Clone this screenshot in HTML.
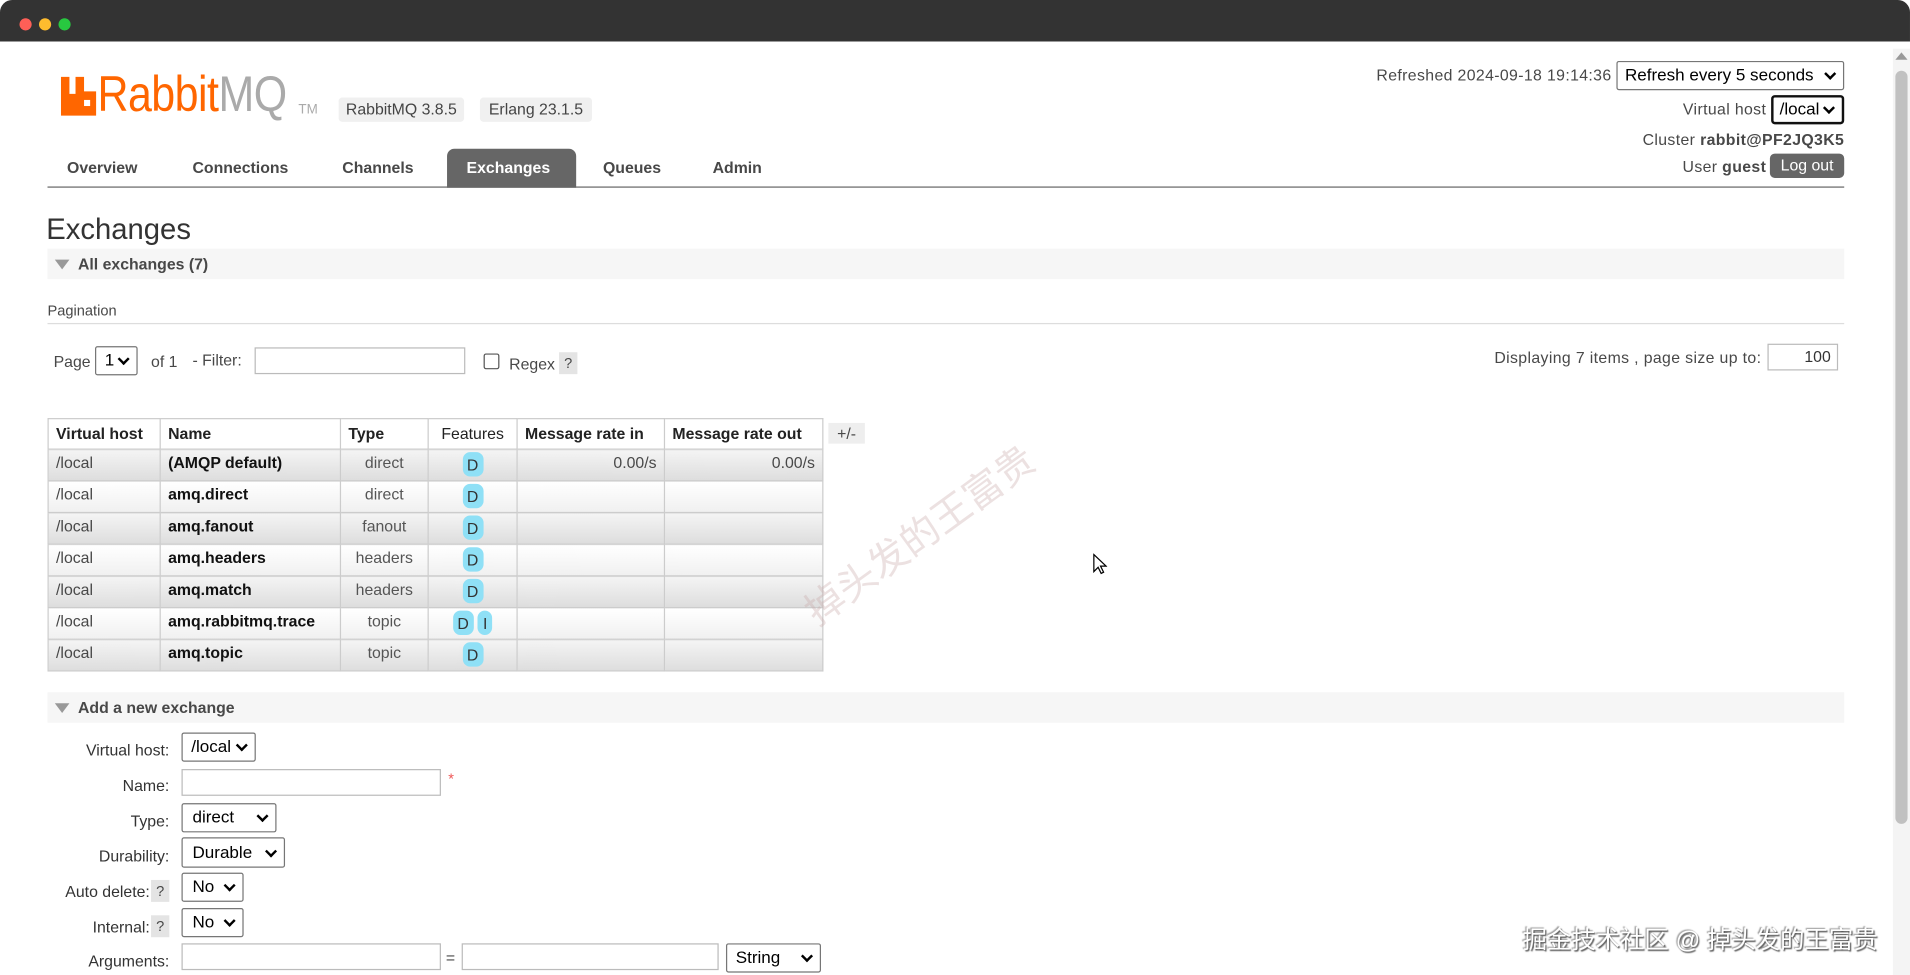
<!DOCTYPE html>
<html><head><meta charset="utf-8"><style>
html,body{margin:0;padding:0;overflow:hidden;background:#fff}
#w{position:absolute;left:0;top:0;width:1568px;height:800px;transform:scale(1.2181,1.21875);transform-origin:0 0;font-family:"Liberation Sans","Noto Sans CJK SC",sans-serif;color:#484848;font-size:13px}
.a{position:absolute;white-space:nowrap}
.sel{position:absolute;border:1px solid #767676;border-radius:2px;background:#fff;color:#000;font-size:14px;box-sizing:border-box;padding:2px 6px}
.sel:after{content:"";position:absolute;right:7px;top:50%;width:5px;height:5px;border-right:2px solid #000;border-bottom:2px solid #000;transform:translateY(-70%) rotate(45deg)}
.inp{position:absolute;border:1px solid #bbb;background:#fff;box-sizing:border-box}
.band{position:absolute;left:39px;width:1475px;height:25px;background:#f6f6f6}
.tri{position:absolute;left:6px;top:9px;border-left:6px solid transparent;border-right:6px solid transparent;border-top:8px solid #999}
.band b{position:absolute;left:25px;top:5px;font-size:13px}
.q{position:absolute;background:#e4e4e4;font-size:12px;text-align:center;width:15px;height:18px;line-height:18px}
table{position:absolute;left:39px;top:343px;border-collapse:collapse;font-size:13px}
td,th{border:1px solid #ccc;height:26px;padding:0 6px;vertical-align:top;line-height:22px;box-sizing:border-box}
th{text-align:left;font-weight:bold;color:#222;height:24px;line-height:24px;background:#fff}
th.n{font-weight:normal;text-align:center}
tr.o td{background:linear-gradient(#f4f4f4,#ddd)}
tr.e td{background:linear-gradient(#fff,#f0f0f0)}
td.c{text-align:center;color:#555}
td.r{text-align:right}
td b{color:#111}
.d{display:inline-block;background:#8fe0f6;border-radius:6px;width:17px;height:20px;line-height:22px;text-align:center;color:#333;margin-top:2px}
.lab{position:absolute;right:1429px;font-size:13px;color:#333}
</style></head><body><div id="w">
<div class="a" style="left:0;top:0;width:1568px;height:34px;background:#333;border-radius:10px 10px 0 0"></div>
<div class="a" style="left:16px;top:15px;width:10px;height:10px;border-radius:5px;background:#fe5f57"></div>
<div class="a" style="left:32px;top:15px;width:10px;height:10px;border-radius:5px;background:#febc2e"></div>
<div class="a" style="left:48px;top:15px;width:10px;height:10px;border-radius:5px;background:#28c840"></div>
<div class="a" style="left:1554px;top:40px;width:14px;height:760px;background:#f4f4f4"></div>
<div class="a" style="left:1556px;top:58px;width:10px;height:618px;background:#c1c1c1;border-radius:5px"></div>
<div class="a" style="left:1556px;top:43px;border-left:5px solid transparent;border-right:5px solid transparent;border-bottom:6px solid #999"></div>
<svg class="a" style="left:50px;top:63px" width="29" height="32" viewBox="0 0 29 32"><path d="M0 0h7v14h5V0h7v12h10v20H0z" fill="#f60"/><rect x="19" y="19" width="5" height="5" fill="#fff"/></svg>
<div class="a" style="left:80px;top:54px;font-size:41px;transform:scaleX(0.86);transform-origin:0 0;letter-spacing:-0.5px"><span style="color:#f60">Rabbit</span><span style="color:#aaa">MQ</span></div>
<div class="a" style="left:245px;top:84px;font-size:11px;color:#aaa">TM</div>
<div class="a" style="left:278px;top:80px;width:103px;height:20px;background:#f0f0f0;border-radius:3px;text-align:center;line-height:20px;color:#444">RabbitMQ 3.8.5</div>
<div class="a" style="left:394px;top:80px;width:92px;height:20px;background:#f0f0f0;border-radius:3px;text-align:center;line-height:20px;color:#444">Erlang 23.1.5</div>
<div class="a" style="left:367px;top:122px;width:106px;height:32px;background:#666;border-radius:6px 6px 0 0"></div>
<div class="a" style="top:130px;left:55px;font-weight:bold">Overview</div>
<div class="a" style="top:130px;left:158px;font-weight:bold">Connections</div>
<div class="a" style="top:130px;left:281px;font-weight:bold">Channels</div>
<div class="a" style="top:130px;left:383px;font-weight:bold;color:#fff">Exchanges</div>
<div class="a" style="top:130px;left:495px;font-weight:bold">Queues</div>
<div class="a" style="top:130px;left:585px;font-weight:bold">Admin</div>
<div class="a" style="left:39px;top:153px;width:1475px;height:1px;background:#666"></div>
<div class="a" style="right:245px;top:54px;letter-spacing:0.3px">Refreshed 2024-09-18 19:14:36</div>
<div class="sel" style="left:1327px;top:50px;width:187px;height:24px">Refresh every 5 seconds</div>
<div class="a" style="right:118px;top:82px;letter-spacing:0.3px">Virtual host</div>
<div class="sel" style="left:1454px;top:78px;width:60px;height:24px;border:2px solid #111;border-radius:3px;padding:1px 5px">/local</div>
<div class="a" style="right:54px;top:107px;letter-spacing:0.3px">Cluster <b>rabbit@PF2JQ3K5</b></div>
<div class="a" style="right:118px;top:129px;letter-spacing:0.3px">User <b>guest</b></div>
<div class="a" style="left:1453px;top:126px;width:61px;height:20px;background:#666;color:#fff;border-radius:4px;text-align:center;line-height:20px">Log out</div>
<div class="a" style="left:38px;top:175px;font-size:24px;color:#333">Exchanges</div>
<div class="band" style="top:204px"><i class="tri"></i><b>All exchanges (7)</b></div>
<div class="a" style="left:39px;top:248px;font-size:12px">Pagination</div>
<div class="a" style="left:39px;top:265px;width:1475px;height:1px;background:#ddd"></div>
<div class="a" style="left:44px;top:289px">Page</div>
<div class="sel" style="left:78px;top:284px;width:35px;height:24px;padding:2px 7px">1</div>
<div class="a" style="left:124px;top:289px">of 1</div>
<div class="a" style="left:158px;top:288px">- Filter:</div>
<div class="inp" style="left:209px;top:285px;width:173px;height:22px"></div>
<div class="a" style="left:397px;top:290px;width:11px;height:11px;border:1px solid #555;border-radius:2px"></div>
<div class="a" style="left:418px;top:291px">Regex</div>
<div class="q" style="left:459px;top:289px">?</div>
<div class="a" style="right:122px;top:286px;letter-spacing:0.3px">Displaying 7 items , page size up to:</div>
<div class="inp" style="left:1451px;top:282px;width:58px;height:22px;text-align:right;padding:2px 5px;color:#333">100</div>
<table>
<tr><th style="width:92px">Virtual host</th><th style="width:148px">Name</th><th style="width:72px">Type</th><th class="n" style="width:73px">Features</th><th style="width:121px">Message rate in</th><th style="width:130px">Message rate out</th></tr>
<tr class="o"><td>/local</td><td><b>(AMQP default)</b></td><td class="c">direct</td><td class="c"><span class="d">D</span></td><td class="r">0.00/s</td><td class="r">0.00/s</td></tr>
<tr class="e"><td>/local</td><td><b>amq.direct</b></td><td class="c">direct</td><td class="c"><span class="d">D</span></td><td></td><td></td></tr>
<tr class="o"><td>/local</td><td><b>amq.fanout</b></td><td class="c">fanout</td><td class="c"><span class="d">D</span></td><td></td><td></td></tr>
<tr class="e"><td>/local</td><td><b>amq.headers</b></td><td class="c">headers</td><td class="c"><span class="d">D</span></td><td></td><td></td></tr>
<tr class="o"><td>/local</td><td><b>amq.match</b></td><td class="c">headers</td><td class="c"><span class="d">D</span></td><td></td><td></td></tr>
<tr class="e"><td>/local</td><td><b>amq.rabbitmq.trace</b></td><td class="c">topic</td><td class="c"><span class="d">D</span> <span class="d" style="width:12px">I</span></td><td></td><td></td></tr>
<tr class="o"><td>/local</td><td><b>amq.topic</b></td><td class="c">topic</td><td class="c"><span class="d">D</span></td><td></td><td></td></tr>
</table>
<div class="a" style="left:680px;top:347px;width:30px;height:17px;background:#eee;text-align:center;line-height:17px">+/-</div>
<div class="a" style="left:650px;top:485px;font-size:32px;color:rgba(200,170,170,0.35);transform:rotate(-36deg);transform-origin:0 0">掉头发的王富贵</div>
<svg class="a" style="left:897px;top:454px" width="12" height="18" viewBox="0 0 12 18"><path d="M1 1v14l3.5-3.5 2.5 5 2-1-2.5-5H11z" fill="#fff" stroke="#000" stroke-width="1"/></svg>
<div class="band" style="top:568px"><i class="tri"></i><b>Add a new exchange</b></div>
<div class="lab" style="top:608px">Virtual host:</div>
<div class="sel" style="left:149px;top:601px;width:61px;height:24px;padding:2px 7px">/local</div>
<div class="lab" style="top:637px">Name:</div>
<div class="inp" style="left:149px;top:631px;width:213px;height:22px"></div>
<div class="a" style="left:368px;top:632px;color:#e55;font-size:12px">*</div>
<div class="lab" style="top:666px">Type:</div>
<div class="sel" style="left:149px;top:659px;width:78px;height:24px;padding:2px 8px">direct</div>
<div class="lab" style="top:695px">Durability:</div>
<div class="sel" style="left:149px;top:687px;width:85px;height:25px;padding:3px 8px">Durable</div>
<div class="lab" style="top:724px;right:1445px">Auto delete:</div>
<div class="q" style="left:124px;top:722px">?</div>
<div class="sel" style="left:149px;top:716px;width:51px;height:24px;padding:2px 8px">No</div>
<div class="lab" style="top:753px;right:1445px">Internal:</div>
<div class="q" style="left:124px;top:751px">?</div>
<div class="sel" style="left:149px;top:745px;width:51px;height:24px;padding:2px 8px">No</div>
<div class="lab" style="top:781px">Arguments:</div>
<div class="inp" style="left:149px;top:774px;width:213px;height:22px"></div>
<div class="a" style="left:366px;top:778px">=</div>
<div class="inp" style="left:379px;top:774px;width:211px;height:22px"></div>
<div class="sel" style="left:596px;top:774px;width:78px;height:24px;padding:2px 7px">String</div>
<div class="a" style="left:1250px;top:755px;font-size:20px;color:#fff;text-shadow:1px 1px 1px #555,-1px -1px 1px #999">掘金技术社区 @ 掉头发的王富贵</div>
</div></body></html>
